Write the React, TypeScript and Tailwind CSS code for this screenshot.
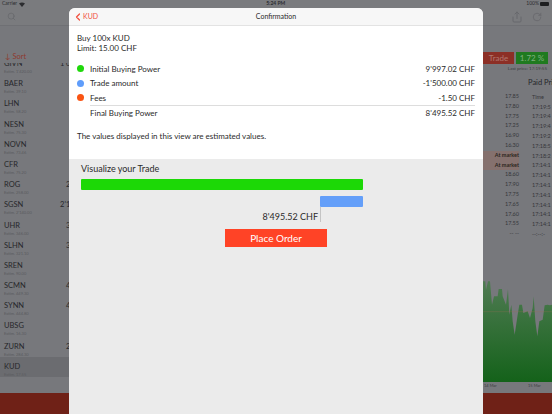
import { ChevronLeft, RotateCw, Search, Share } from "lucide-react";

const stocks = [
  { name: "GIVN", sub: "Extim. 1'420.00", qty: "1'000" },
  { name: "BAER", sub: "Extim. 39.10", qty: "" },
  { name: "LHN", sub: "Extim. 58.20", qty: "" },
  { name: "NESN", sub: "Extim. 75.30", qty: "" },
  { name: "NOVN", sub: "Extim. 73.46", qty: "" },
  { name: "CFR", sub: "Extim. 75.20", qty: "" },
  { name: "ROG", sub: "Extim. 258.00", qty: "200" },
  { name: "SGSN", sub: "Extim. 2'140.00", qty: "2'100" },
  { name: "UHR", sub: "Extim. 346.00", qty: "300" },
  { name: "SLHN", sub: "Extim. 321.10", qty: "300" },
  { name: "SREN", sub: "Extim. 90.00", qty: "" },
  { name: "SCMN", sub: "Extim. 449.30", qty: "400" },
  { name: "SYNN", sub: "Extim. 444.80", qty: "400" },
  { name: "UBSG", sub: "Extim. 16.30", qty: "" },
  { name: "ZURN", sub: "Extim. 284.30", qty: "200" },
  { name: "KUD", sub: "Extim. 17.55", qty: "", selected: true },
];

const trades = [
  ["17.85", "Time"],
  ["17.80", "17:19:5"],
  ["17.75", "17:19:4"],
  ["17.25", "17:19:4"],
  ["16.90", "17:19:2"],
  ["16.30", "17:18:5"],
  ["At market", "17:18:2"],
  ["At market", "17:14:1"],
  ["18.60", "17:14:1"],
  ["17.90", "17:14:1"],
  ["17.75", "17:14:1"],
  ["17.65", "17:14:1"],
  ["17.60", "17:14:1"],
  ["17.55", "17:14:1"],
  ["-- --", "--:--:-"],
];

const breakdown = [
  { label: "Initial Buying Power", value: "9'997.02 CHF", dot: "bg-[#1fd80b]" },
  { label: "Trade amount", value: "-1'500.00 CHF", dot: "bg-[#5f9dfb]" },
  { label: "Fees", value: "-1.50 CHF", dot: "bg-[#fa5413]" },
];

function StockList() {
  return (
    <div className="w-[69px] overflow-hidden">
      <div className="h-[11px] pl-[5px] text-[7.5px] leading-[10px] text-[#8f3a30]">↓ Sort</div>
      <div className="h-[318px] overflow-hidden">
        <div className="-mt-[9px]">
          {stocks.map((s) => (
            <div
              key={s.name}
              className={`flex h-[20.2px] w-[83px] justify-between pt-[5px] pr-[4px] pl-[4px] ${
                s.selected ? "bg-[#6b6c70]" : ""
              }`}
            >
              <div>
                <div className="text-[7.5px] leading-[10px] text-[#26272a]">{s.name}</div>
                <div className="text-[4px] leading-[6px] whitespace-nowrap text-[#5a5b5f]">{s.sub}</div>
              </div>
              <div className="text-[7.5px] leading-[10px] text-[#26272a]">{s.qty}</div>
            </div>
          ))}
        </div>
      </div>
    </div>
  );
}

function RightPanel() {
  return (
    <div className="flex w-[69px] flex-col overflow-hidden">
      <div className="flex h-[12px] gap-[2px]">
        <div className="flex h-[12px] w-[31px] items-center justify-center bg-[#8c2f26] text-[8px] text-[#b2776f]">
          Trade
        </div>
        <div className="flex h-[12px] w-[32px] items-center justify-center bg-[#1f7a1f] text-[8px] text-[#7fb07f]">
          1.72 %
        </div>
      </div>
      <div className="mt-[2px] pr-[5px] text-right text-[4.5px] leading-[6px] text-[#3b3c40]">Last price: 17:19:55</div>
      <div className="mt-[5px] h-[12px] pl-[45px] text-[7.5px] leading-[12px] whitespace-nowrap text-[#26272a]">
        Paid Pri
      </div>
      <div className="mt-[3px]">
        {trades.map(([price, time], i) => (
          <div
            key={i}
            className={`flex h-[9.8px] items-center text-[5.5px] whitespace-nowrap text-[#36373b] ${
              price === "At market" ? "font-bold" : ""
            }`}
          >
            <div
              className={`h-full w-[36px] text-right leading-[9.8px] ${
                price === "At market" ? "bg-[#85716e] text-[#2c2520]" : ""
              }`}
            >
              {price}
            </div>
            <div className="ml-[13px] font-normal">{time}</div>
          </div>
        ))}
      </div>
      <div className="mt-[41px]">
        <svg viewBox="0 0 207 306" width="69" height="102" className="block">
          <defs>
            <linearGradient id="chart" x1="0" y1="0" x2="0" y2="1">
              <stop offset="0" stopColor="#4f7b52" />
              <stop offset="1" stopColor="#14621a" />
            </linearGradient>
          </defs>
          <path
            d="M0 4 L7 4 L9 29 L15 4 L21 4 L27 74 L33 49 L44 49 L47 27 L57 27 L59 49 L69 74 L75 27 L79 104 L85 74 L89 124 L95 164 L104 104 L109 74 L117 74 L121 99 L134 94 L141 114 L149 84 L152 49 L157 124 L163 169 L169 124 L179 119 L185 76 L194 74 L201 76 L207 74 L207 306 L0 306 Z"
            fill="url(#chart)"
          />
          <line x1="0" y1="95" x2="207" y2="95" stroke="#9a6f55" strokeWidth="1.5" strokeOpacity="0.6" />
        </svg>
      </div>
      <div className="flex h-[11px] pl-[1px] text-[4px] leading-[8px] text-[#3b3c40]">
        <span className="w-[44px]">14 Mar</span>
        <span>15 Mar</span>
      </div>
    </div>
  );
}

function ConfirmationModal() {
  return (
    <div className="absolute top-[8px] bottom-0 left-[69px] flex w-[414px] flex-col overflow-hidden rounded-t-[6px] bg-[#ebebeb] text-[#2a2a2a]">
      <div className="relative flex h-[18px] items-center justify-center border-b border-[#e3e3e3] bg-[#f7f7f7]">
        <div className="absolute top-0 left-[3px] flex h-full items-center text-[#f2503f]">
          <ChevronLeft size={12} strokeWidth={2.5} />
          <span className="-ml-[1px] text-[7px]">KUD</span>
        </div>
        <span className="text-[7px]">Confirmation</span>
      </div>
      <div className="h-[133px] bg-white pt-[8px] pr-[8px] pl-[8px] text-[8px]">
        <div className="leading-[9.7px]">Buy 100x KUD</div>
        <div className="leading-[9.7px]">Limit: 15.00 CHF</div>
        <div className="mt-[8px]">
          {breakdown.map((row) => (
            <div key={row.label} className="flex h-[14.5px] items-center">
              <span className={`h-[7px] w-[7px] rounded-full ${row.dot}`} />
              <span className="ml-[6px]">{row.label}</span>
              <span className="ml-auto">{row.value}</span>
            </div>
          ))}
          <div className="ml-[13px] flex h-[14.5px] items-center border-t border-[#dddddd]">
            <span>Final Buying Power</span>
            <span className="ml-auto">8'495.52 CHF</span>
          </div>
        </div>
        <div className="mt-[12px] leading-[10px]">The values displayed in this view are estimated values.</div>
      </div>
      <div className="pt-[5px] pl-[12px]">
        <div className="h-[10px] text-[9px] leading-[10px]">Visualize your Trade</div>
        <div className="mt-[5px] h-[11px] w-[282px] rounded-[1px] bg-[#1cd806]" />
        <div className="mt-[6px] flex w-[282px] justify-end">
          <div className="h-[11px] w-[43px] rounded-[1px] bg-[#649ff9]" />
        </div>
        <div className="flex h-[15px] w-[240px] justify-end border-r border-[#c4c4c4] pr-[2px] text-[9px] leading-[20px]">
          8'495.52 CHF
        </div>
        <div className="mt-[7px] ml-[144px] flex h-[18px] w-[102px] items-center justify-center bg-[#ff4326] text-[10px] text-white">
          Place Order
        </div>
      </div>
    </div>
  );
}

export default function App() {
  return (
    <div
      className="relative flex h-[414px] w-[552px] flex-col overflow-hidden bg-[#77787c]"
      style={{ fontFamily: "Lato, 'Noto Sans', sans-serif" }}
    >
      <div className="flex h-[8px] items-center justify-between bg-[#7a7b7e] pr-[3px] pl-[2px] text-[5px] text-[#2c2d30]">
        <span className="flex items-center gap-[2px]">
          Carrier
          <svg viewBox="0 0 10 8" width="6" height="5" className="block">
            <path d="M5 8 L0 2.5 Q5 -1.5 10 2.5 Z" fill="#2c2d30" />
          </svg>
        </span>
        <span className="font-bold">5:24 PM</span>
        <span className="flex items-center gap-[1px]">
          100%
          <span className="h-[4px] w-[9px] rounded-[1px] bg-[#1d1e20]" />
        </span>
      </div>
      <div className="flex h-[18px] items-center justify-between border-b border-[#6f7074] bg-[#7a7b7e] pr-[10px] pl-[7px] text-[#67686c]">
        <Search size={9} />
        <div className="flex items-center gap-[9px]">
          <Share size={12} />
          <RotateCw size={10} />
        </div>
      </div>
      <div className="flex flex-1 justify-between pt-[26px]">
        <StockList />
        <RightPanel />
      </div>
      <div className="h-[21px] bg-[#6f2117]" />
      <ConfirmationModal />
    </div>
  );
}
